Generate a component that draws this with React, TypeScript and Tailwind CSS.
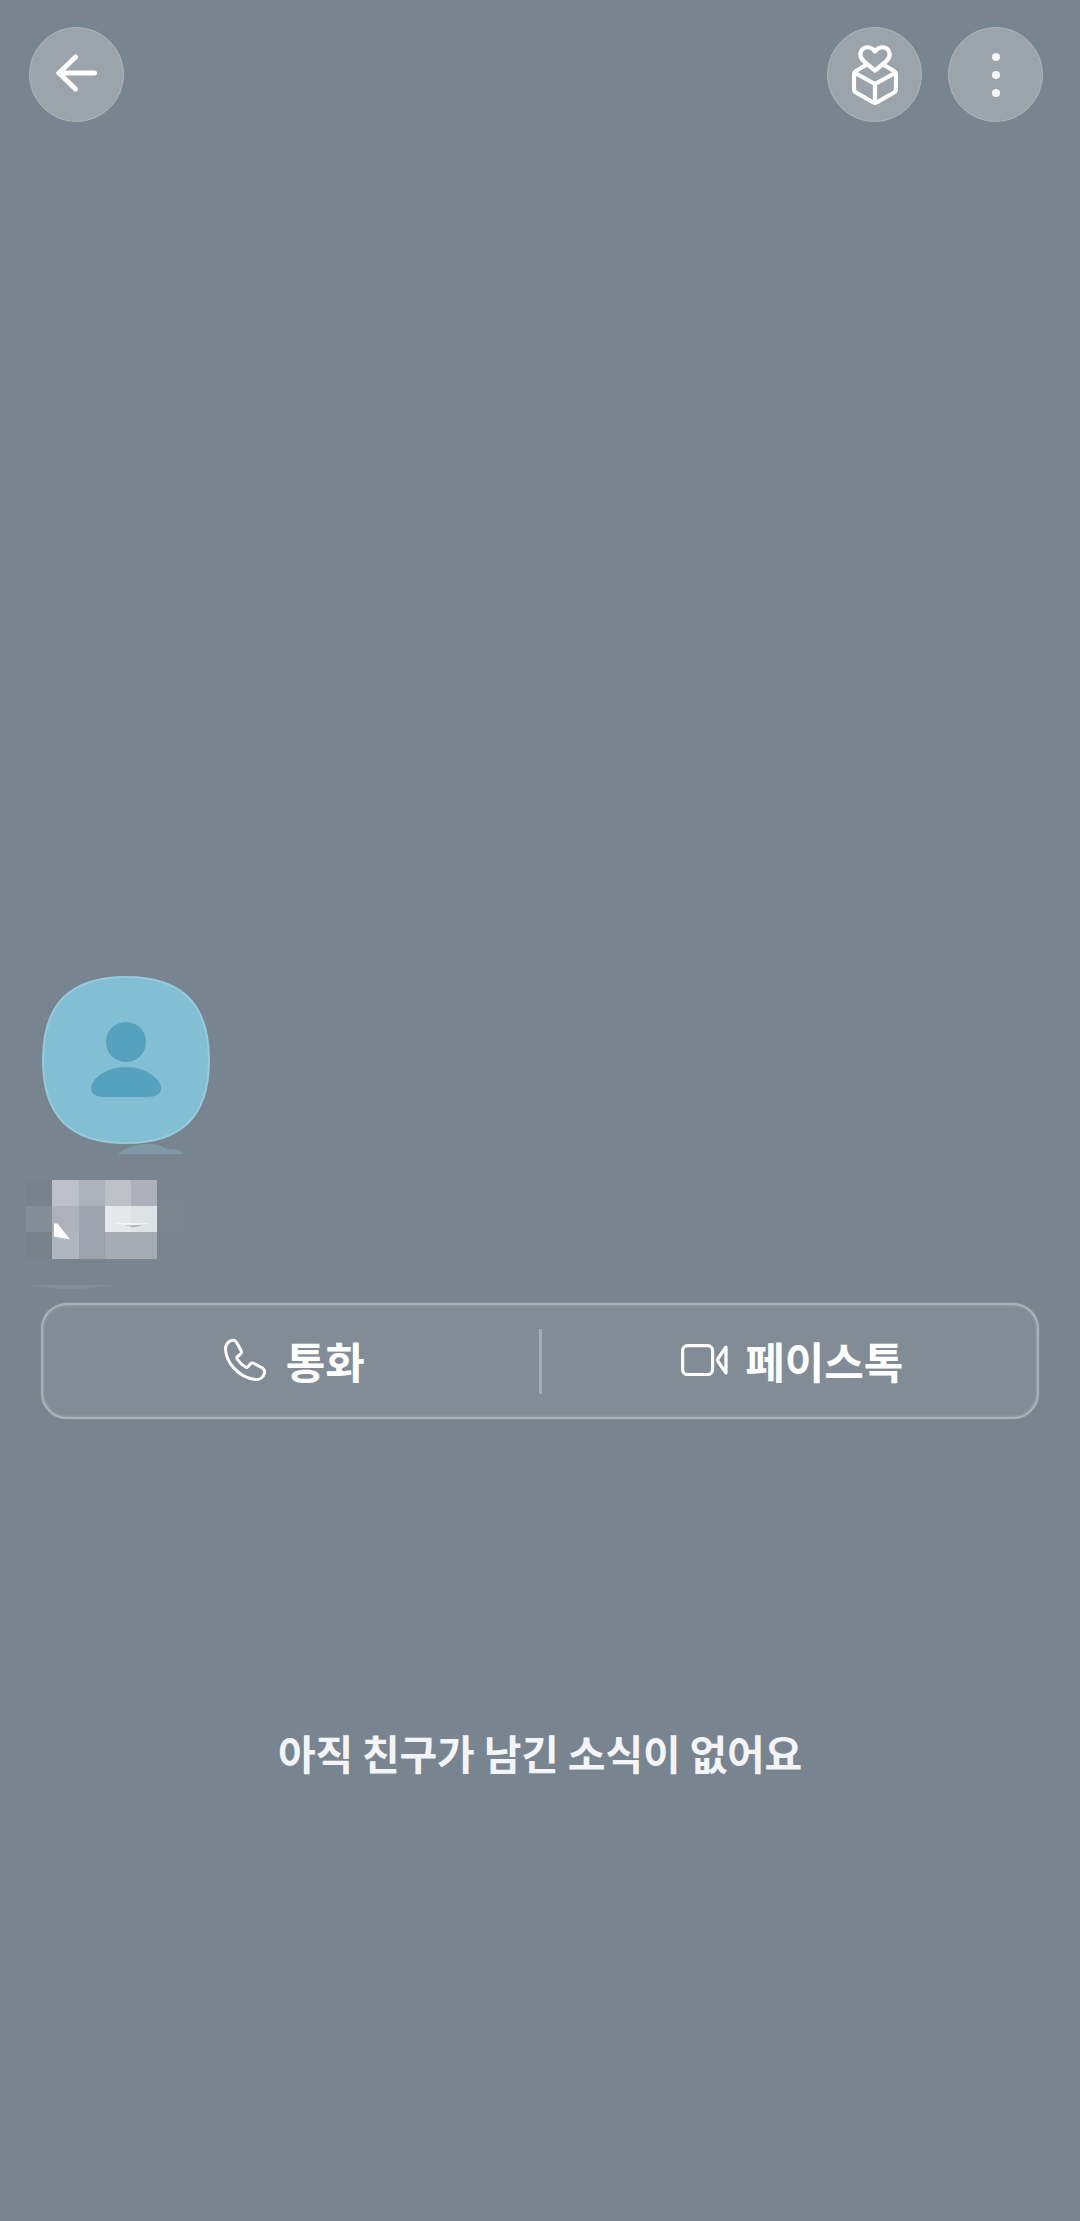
const FONT = "font-['Noto_Sans_CJK_KR','Noto_Sans',sans-serif]";

const cells = [
  "bg-[#78828d]", "bg-[#bcc0c9]", "bg-[#adb2ba]", "bg-[#bdc1c6]", "bg-[#adb0b9]", "bg-transparent",
  "bg-[#848e98]", "bg-[#adb1ba]", "bg-[#9fa5af]", "bg-[#e6e8ea]", "bg-[#dfe2e5]", "bg-[#7b8590]",
  "bg-[#78828d]", "bg-[#b0b6bf]", "bg-[#9ca3ad]", "bg-[#a6acb4]", "bg-[#a6acb4]", "bg-transparent",
];

function Circle({ children }: { children: React.ReactNode }) {
  return (
    <div className="flex h-[95px] w-[95px] items-center justify-center rounded-full border border-[#aeb6bb] bg-[#9ba4ab]">
      {children}
    </div>
  );
}

export default function App() {
  return (
    <div className={`flex h-[2221px] w-[1080px] flex-col overflow-hidden bg-[#78848f] ${FONT}`}>
      <header className="flex justify-between pl-[29px] pr-[37px] pt-[27px]">
        <Circle>
          <svg className="mb-[3px]" width="41" height="38" viewBox="0 0 41 38" fill="none" stroke="white" strokeWidth="5" strokeLinecap="round" strokeLinejoin="round">
            <path d="M3 19H38.500" />
            <path d="M19.500 3L3 19L19.500 35" />
          </svg>
        </Circle>
        <div className="flex gap-[26px]">
          <Circle>
            <svg width="46" height="60" viewBox="0 0 46 60" fill="none" stroke="white" strokeWidth="4.200" strokeLinecap="round" strokeLinejoin="round">
              <path d="M23 25.500L12.500 17C8 13 7.500 9 9.500 5.500C12.500 1 19.500 1 23 6.500C26.500 1 33.500 1 36.500 5.500C38.500 9 38 13 33.500 17Z" />
              <path d="M14 20L4 26C2.700 26.800 2 28 2 29.500V44C2 45.500 2.700 46.700 4 47.500L20.500 57C22 57.900 24 57.900 25.500 57L42 47.500C43.300 46.700 44 45.500 44 44V29.500C44 28 43.300 26.800 42 26L32 20" />
              <path d="M3 28L23 39L43 28" />
              <path d="M23 39V57" />
            </svg>
          </Circle>
          <Circle>
            <div className="flex flex-col gap-[10px]">
              <div className="h-[8px] w-[8px] rounded-full bg-[#f4f5f6]" />
              <div className="h-[8px] w-[8px] rounded-full bg-[#f4f5f6]" />
              <div className="h-[8px] w-[8px] rounded-full bg-[#f4f5f6]" />
            </div>
          </Circle>
        </div>
      </header>

      <div className="ml-[42px] mt-[854px] h-[178px] w-[168px]">
        <svg width="168" height="178" viewBox="0 0 168 178">
          <path d="M76 178C84 170 98 168 110 168C118 168 122 172 127 174C131 172 136 173 142 178Z" fill="#7f98a6" />
          <path d="M84 1C140 1 167 28 167 84C167 140 140 167 84 167C28 167 1 140 1 84C1 28 28 1 84 1Z" fill="#82bfd4" stroke="#97cadb" strokeWidth="2" />
          <circle cx="84" cy="66" r="20" fill="#56a1bd" />
          <path d="M84 91C105 91 119 104 119 112C119 118 114 121 105 121H63C54 121 49 118 49 112C49 104 63 91 84 91Z" fill="#56a1bd" />
        </svg>
      </div>

      <div className="relative ml-[26px] mt-[26px] grid h-[79px] w-[158px] grid-cols-[26px_27px_26px_26px_26px_27px] grid-rows-[26px_26px_27px]">
        {cells.map((c, i) => (
          <div key={i} className={c} />
        ))}
        <svg className="absolute left-[27px] top-[43px]" width="18" height="17" viewBox="0 0 18 17">
          <path d="M1 0.500L4.500 0.500L17 16.500L1 13.500Z" fill="#ffffff" />
        </svg>
        <svg className="absolute left-[89px] top-[43px]" width="34" height="5" viewBox="0 0 34 5">
          <path d="M0 0.500H34C26 2 8 2 0 0.500Z" fill="#ffffff" />
          <path d="M10 2.500H28C22 4 16 4 10 2.500Z" fill="#8e959e" />
        </svg>
      </div>

      <svg className="ml-[28px] mt-[26px] shrink-0" width="87" height="4" viewBox="0 0 87 4">
        <path d="M0 0H87C70 2.500 55 4 42 4C28 4 15 2 0 0Z" fill="#848e98" />
      </svg>

      <div className="mx-[41px] mt-[14px] flex h-[116px] items-center rounded-[26px] border-[2px] border-[#a9b2b9] bg-[#818c97] shadow-[inset_0_0_3px_#a9b2b9,0_0_2px_#98a1a9]">
        <div className="flex flex-1 items-center justify-center gap-[19px] pb-[2px] pl-[6px]">
          <svg width="44" height="44" viewBox="0 0 44 44" fill="none" stroke="white" strokeWidth="3" strokeLinecap="round" strokeLinejoin="round">
            <path d="M2.500 11C2.500 5.500 7 1.800 10.500 2.300C12.500 2.500 13.500 4 14.500 6L18 12.500C18.800 14 18.300 15.500 17 16.500L14.500 18.500C13.700 19.200 13.700 20 14.200 21C16.500 24.500 19 27 22.500 29C23.500 29.600 24.500 29.300 25.200 28.500L27 26.300C28 25 29.500 24.700 31 25.500L38.500 29.500C41 30.800 42 32.500 41.500 35C40.500 39.500 36.500 42 32.500 41.500C15 39.500 3 24 2.500 11Z" />
          </svg>
          <span className="text-[43px] font-bold leading-none text-white">통화</span>
        </div>
        <div className="h-[65px] w-[3px] bg-[#a3acb4]" />
        <div className="flex flex-1 items-center justify-center gap-[17px] pb-[2px] pl-[6px]">
          <svg width="47" height="32" viewBox="0 0 47 32" fill="none" stroke="white" strokeWidth="3.200" strokeLinecap="round" strokeLinejoin="round">
            <rect x="1.600" y="1.600" width="30" height="29" rx="5" />
            <path d="M45 3L37 14.500C36.400 15.400 36.400 16.600 37 17.500L45 29Z" />
          </svg>
          <span className="text-[43px] font-bold leading-none text-white">페이스톡</span>
        </div>
      </div>

      <p className="mt-[309px] text-center text-[41px] font-bold leading-[48px] tracking-[-0.2px] text-[#f2f4f7]">
        아직 친구가 남긴 소식이 없어요
      </p>
    </div>
  );
}
